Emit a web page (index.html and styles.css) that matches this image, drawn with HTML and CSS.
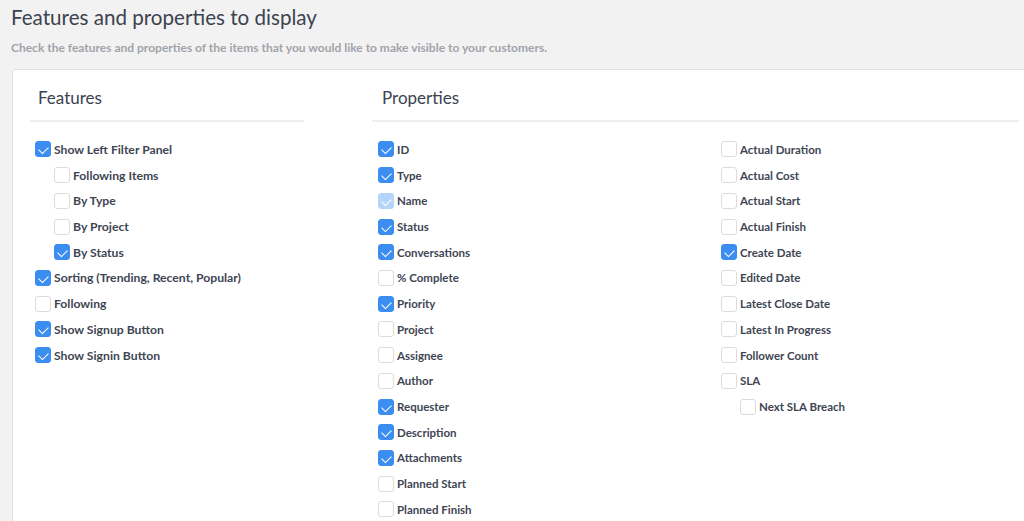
FILE: index.html
```html
<!DOCTYPE html>
<html lang="en">
<head>
    <meta charset="UTF-8">
    <meta name="viewport" content="width=device-width, initial-scale=1.0">
    <title>Features and properties to display</title>
    <link rel="stylesheet" href="styles.css">
</head>
<body>
    <h1 class="page-title">Features and properties to display</h1>
    <p class="page-subtitle">Check the features and properties of the items that you would like to make visible to your customers.</p>

    <div class="panel">
        <section class="group group-features">
            <h2 class="group-title">Features</h2>
            <ul class="option-list">
                <li class="option"><label><input type="checkbox" checked> Show Left Filter Panel</label></li>
                <li class="option nested"><label><input type="checkbox"> Following Items</label></li>
                <li class="option nested"><label><input type="checkbox"> By Type</label></li>
                <li class="option nested"><label><input type="checkbox"> By Project</label></li>
                <li class="option nested"><label><input type="checkbox" checked> By Status</label></li>
                <li class="option"><label><input type="checkbox" checked> Sorting (Trending, Recent, Popular)</label></li>
                <li class="option"><label><input type="checkbox"> Following</label></li>
                <li class="option"><label><input type="checkbox" checked> Show Signup Button</label></li>
                <li class="option"><label><input type="checkbox" checked> Show Signin Button</label></li>
            </ul>
        </section>

        <section class="group group-properties">
            <h2 class="group-title">Properties</h2>
            <div class="prop-columns">
                <ul class="option-list small">
                    <li class="option"><label><input type="checkbox" checked> ID</label></li>
                    <li class="option"><label><input type="checkbox" checked> Type</label></li>
                    <li class="option"><label><input type="checkbox" checked disabled> Name</label></li>
                    <li class="option"><label><input type="checkbox" checked> Status</label></li>
                    <li class="option"><label><input type="checkbox" checked> Conversations</label></li>
                    <li class="option"><label><input type="checkbox"> % Complete</label></li>
                    <li class="option"><label><input type="checkbox" checked> Priority</label></li>
                    <li class="option"><label><input type="checkbox"> Project</label></li>
                    <li class="option"><label><input type="checkbox"> Assignee</label></li>
                    <li class="option"><label><input type="checkbox"> Author</label></li>
                    <li class="option"><label><input type="checkbox" checked> Requester</label></li>
                    <li class="option"><label><input type="checkbox" checked> Description</label></li>
                    <li class="option"><label><input type="checkbox" checked> Attachments</label></li>
                    <li class="option"><label><input type="checkbox"> Planned Start</label></li>
                    <li class="option"><label><input type="checkbox"> Planned Finish</label></li>
                </ul>
                <ul class="option-list small">
                    <li class="option"><label><input type="checkbox"> Actual Duration</label></li>
                    <li class="option"><label><input type="checkbox"> Actual Cost</label></li>
                    <li class="option"><label><input type="checkbox"> Actual Start</label></li>
                    <li class="option"><label><input type="checkbox"> Actual Finish</label></li>
                    <li class="option"><label><input type="checkbox" checked> Create Date</label></li>
                    <li class="option"><label><input type="checkbox"> Edited Date</label></li>
                    <li class="option"><label><input type="checkbox"> Latest Close Date</label></li>
                    <li class="option"><label><input type="checkbox"> Latest In Progress</label></li>
                    <li class="option"><label><input type="checkbox"> Follower Count</label></li>
                    <li class="option"><label><input type="checkbox"> SLA</label></li>
                    <li class="option nested"><label><input type="checkbox"> Next SLA Breach</label></li>
                </ul>
            </div>
        </section>
    </div>
</body>
</html>
```

FILE: styles.css
```css
html, body {
    overflow: hidden;
}
body {
    font-family: Lato, "Open Sans", Arial, sans-serif;
    margin: 0;
    padding: 0 0 0 11px;
    background-color: #f2f2f2;
    color: #3e4553;
}
.page-title {
    font-size: 20.6px;
    font-weight: 400;
    line-height: 28px;
    margin: 3px 0 0 0;
    color: #3b4250;
}
.page-subtitle {
    font-size: 12px;
    font-weight: 700;
    line-height: 16px;
    margin: 9px 0 0 0;
    color: #a0a4aa;
}
.panel {
    display: flex;
    gap: 68px;
    width: 1040px;
    margin: 13px 0 0 1px;
    padding: 16px 17px 0 17px;
    background-color: #ffffff;
    border: 1px solid #e0e0e0;
    border-radius: 4px;
}
.group-features {
    width: 274px;
}
.group-properties {
    width: 647px;
}
.group-title {
    font-size: 17px;
    font-weight: 400;
    line-height: 24px;
    margin: 0;
    padding: 0 0 10px 8px;
    border-bottom: 2px solid #eeeeee;
    color: #3b4250;
}
.group-properties .group-title {
    padding-left: 10px;
}
.prop-columns {
    display: grid;
    grid-template-columns: 343px 1fr;
}
.option-list {
    list-style: none;
    margin: 0;
    padding: 14.5px 0 0 5px;
}
.group-properties .option-list {
    padding-left: 6px;
}
.option {
    height: 25.72px;
    display: flex;
    align-items: center;
    font-size: 12.2px;
    font-weight: 700;
}
.option-list.small .option {
    font-size: 11.5px;
}
.option.nested {
    padding-left: 19px;
}
.option label {
    display: flex;
    align-items: center;
    gap: 3px;
    cursor: pointer;
}
input[type="checkbox"] {
    appearance: none;
    -webkit-appearance: none;
    position: relative;
    width: 16px;
    height: 16px;
    margin: 0;
    border: 1px solid #dcdcdc;
    border-radius: 3px;
    background-color: #ffffff;
    flex-shrink: 0;
}
input[type="checkbox"]:checked {
    background-color: #3b8ef0;
    border-color: #3b8ef0;
}
input[type="checkbox"]:checked:disabled {
    background-color: #b4d4fa;
    border-color: #b4d4fa;
}
input[type="checkbox"]:checked::after {
    content: "";
    position: absolute;
    left: 4px;
    top: 1px;
    width: 8px;
    height: 5px;
    border-left: 1.6px solid #ffffff;
    border-bottom: 1.6px solid #ffffff;
    transform: translate(-1px, 3px) rotate(-45deg);
    transform-origin: center;
}
```
